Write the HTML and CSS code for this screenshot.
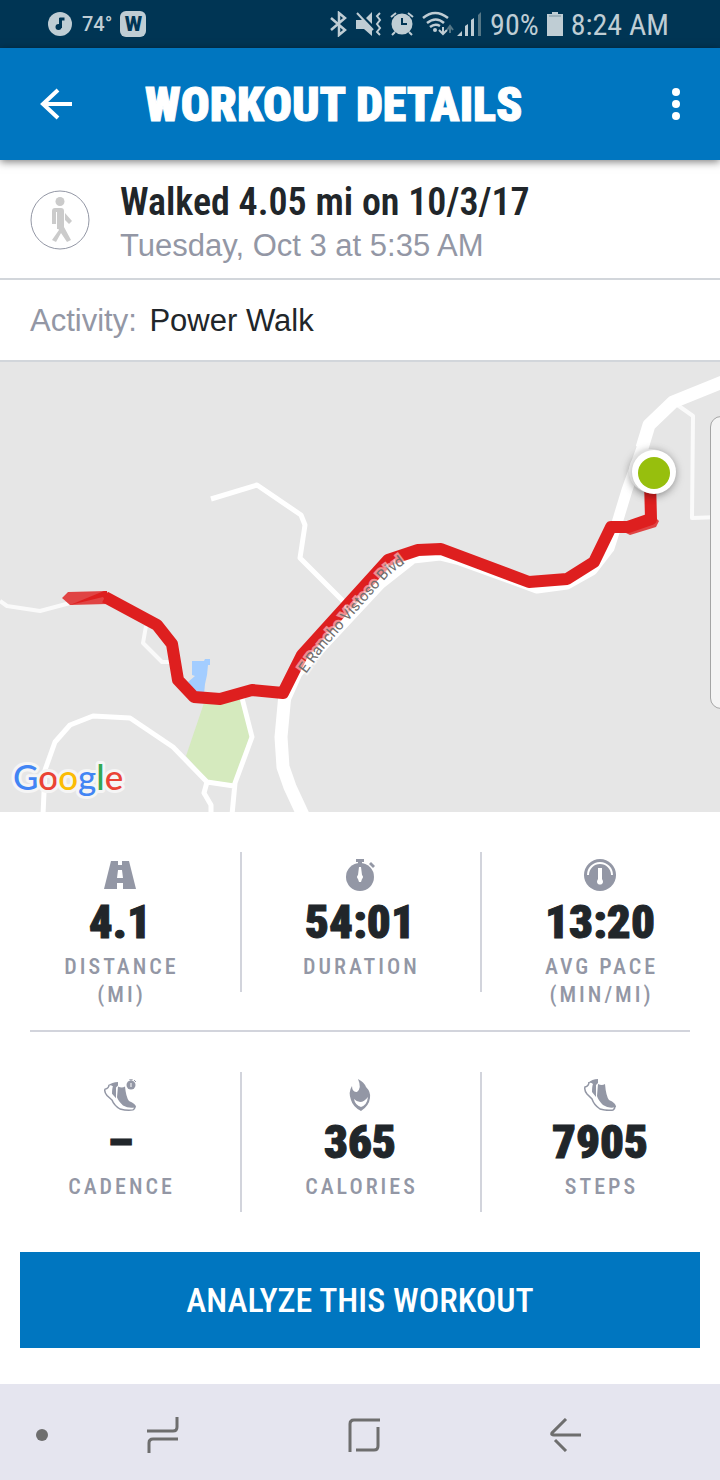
FILE: index.html
```html
<!DOCTYPE html>
<html lang="en">
<head>
  <meta charset="UTF-8">
  <meta name="viewport" content="width=device-width, initial-scale=1.0">
  <title>Workout Details</title>
  <link rel="stylesheet" href="styles.css">
</head>
<body>
  <!-- Status Bar -->
  <div class="status-bar">
    <div class="status-left">
      <svg width="24" height="24" viewBox="0 0 24 24"><circle cx="12" cy="12" r="12" fill="currentColor"/><path d="M12.500 16V6M11.500 7h5" fill="none" stroke="#003554" stroke-width="3"/><circle cx="10.500" cy="15" r="3" fill="#003554"/></svg>
      <span class="temperature">74°</span>
      <span class="badge">W</span>
    </div>
    <div class="status-right">
      <svg width="18" height="26" viewBox="0 0 18 26"><path d="M1 7l14 12-6 5V2l6 5L1 19" fill="none" stroke="currentColor" stroke-width="2.500"/></svg>
      <svg width="26" height="26" viewBox="0 0 26 26"><path d="M0 9h5l2-1 9 9v8l-8-7H0zM10 7l6-6v12z" fill="currentColor"/><path d="M1 2l16 17" stroke="currentColor" stroke-width="2"/><path d="M24 2l-3 3 3 4-3 4 3 4-3 4 3 3" fill="none" stroke="currentColor" stroke-width="2"/></svg>
      <svg width="24" height="26" viewBox="0 0 24 26"><circle cx="12" cy="13" r="10.500" fill="currentColor"/><path d="M1 6l5-4M23 6l-5-4M5 21l-3 3M19 21l3 3" stroke="currentColor" stroke-width="2"/><path d="M12 7v6h5" fill="none" stroke="#003554" stroke-width="2"/></svg>
      <svg width="32" height="26" viewBox="0 0 32 26"><path d="M1 7q12-10 25 0M5 12q9-7 17 0M8 16q5-4 10-1" fill="none" stroke="currentColor" stroke-width="2.500"/><circle cx="13" cy="19" r="2" fill="currentColor"/><path d="M21 16v7m-4-4l4 4 4-4" fill="none" stroke="currentColor" stroke-width="2"/><path d="M28 22v-7m-3 4l3-4 3 4" fill="none" stroke="#557786" stroke-width="2"/></svg>
      <svg class="signal" width="26" height="26" viewBox="0 0 26 26"><path d="M1 25h5v-5zM9 25h3V13l-3 2zM15 25h3V7l-3 2z" fill="currentColor"/><path d="M22 25h3V1l-3 3z" fill="#557786"/></svg>
      <span>90%</span>
      <svg width="16" height="24" viewBox="0 0 16 24"><path d="M5 0h6v2h5v22H0V2h5z" fill="currentColor"/><path d="M2 4h12" stroke="#7893a0"/></svg>
      <span>8:24 AM</span>
    </div>
  </div>

  <!-- App Bar -->
  <header class="app-bar">
    <button class="icon-btn" aria-label="Back">
      <svg width="32" height="32" viewBox="0 0 32 32"><path d="M32 16H3M18 2L3 16l15 14" fill="none" stroke="#fff" stroke-width="4"/></svg>
    </button>
    <h1>WORKOUT DETAILS</h1>
    <button class="icon-btn" aria-label="More options">
      <svg width="8" height="32" viewBox="0 0 8 32" fill="#fff"><circle cx="4" cy="4" r="4"/><circle cx="4" cy="16" r="4"/><circle cx="4" cy="28" r="4"/></svg>
    </button>
  </header>

  <main>
    <!-- Workout Summary -->
    <section class="summary">
      <svg width="60" height="60" viewBox="0 0 60 60">
        <circle cx="30" cy="30" r="29" fill="none" stroke="#9397a5"/>
        <g fill="#cbcbcb"><circle cx="30" cy="11.500" r="4.500"/><path d="M25 18h6q3 0 3 3v18h-7V22h-1v12h-4V21q0-3 3-3zM35 23l7 8-3 3-4-4zM27 37h7l7 13-4 2-8-12zM29 40l2 3-5 9-4-2z"/></g>
      </svg>
      <div class="summary-text">
        <h2>Walked 4.05 mi on 10/3/17</h2>
        <p>Tuesday, Oct 3 at 5:35 AM</p>
      </div>
    </section>
    <p class="activity"><span>Activity:</span> Power Walk</p>

    <!-- Route Map -->
    <section class="map">
      <svg viewBox="0 362 720 450" role="img" aria-label="Route map">
        <path class="park" d="M205 700L242 700L250 735L234 784L207 780L186 756Z"/>
        <path class="water" d="M192 661H204L205 659H210V665L208 665L207 675L205 684L204 695H196L188 682L195 676L192 675Z"/>
        <g class="roads">
          <path class="main-road" d="M725 381L673 402L649 425L642 448"/>
          <path class="mid-road" d="M643 445L627 490L617 523L609 548L592 570L567 584L537 588L460 560L440 555L413 558L380 584L297 673L285 700"/>
          <path class="main-road" d="M285 694L281 737L283 767L290 787L303 815"/>
          <path d="M211 499L257 485L301 515L305 525L300 558L345 603"/>
          <path class="path-road" d="M0 601L7 606L40 611L70 603M146 626L143 643L162 662H172M676 404L693 416L692 518L720 517"/>
          <path d="M43 815L45 770L55 742L70 725L93 716L130 718L173 747L207 782L234 786M207 782L204 793L211 805V815M242 698L252 737L235 783L232 815"/>
        </g>
        <path class="route-light" d="M62 598L68 592L107 591V604L70 605ZM652 514L659 521L656 527L630 535L620 530Z"/>
        <path class="route-end" d="M70 605L104 591H107V603L103 597Z"/>
        <path class="route" d="M650 480L651 519L628 527L611 527L594 562L567 579L529 582L441 549L418 550L388 560L302 655L283 693L252 690L220 699L194 697L178 680L172 644L157 625L105 597"/>
        <path id="street" fill="none" d="M306 674L324 649L350 619L378 587L387 577L412 558"/>
        <text class="street-name"><textPath href="#street">E Rancho Vistoso Blvd</textPath></text>
        <circle class="pin-back" cx="651" cy="471" r="22"/>
        <circle class="pin" cx="654" cy="472" r="22"/>
        <circle cx="654" cy="473" r="16" fill="#97bf0d"/>
        <text class="logo" x="13" y="790"><tspan fill="#4285f4">G</tspan><tspan fill="#ea4335">o</tspan><tspan fill="#fbbc05">o</tspan><tspan fill="#4285f4">g</tspan><tspan fill="#34a853">l</tspan><tspan fill="#ea4335">e</tspan></text>
      </svg>
      <div class="edge-handle"></div>
    </section>

    <!-- Stats -->
    <section class="stats">
      <div class="stat">
        <svg width="32" height="32" viewBox="0 0 32 32"><path d="M7 2h7v4h4V2h7l7 28H19v-6h-6v6H0zM14 11l-1 8h6l-1-8z" fill="currentColor" fill-rule="evenodd"/></svg>
        <strong>4.1</strong>
        <span>DISTANCE<br>(MI)</span>
      </div>
      <div class="stat">
        <svg width="32" height="32" viewBox="0 0 32 32"><g fill="currentColor"><circle cx="16" cy="18" r="14"/><path d="M12 0h8v3h-2v3h-4V3h-2zM27 3l4 4-2 2-4-4z"/></g><path d="M15 8h2l1 8q2 2 0 4l-1 3h-2l-1-3q-2-2 0-4z" fill="#fff"/></svg>
        <strong>54:01</strong>
        <span>DURATION</span>
      </div>
      <div class="stat">
        <svg width="32" height="32" viewBox="0 0 32 32"><circle cx="16" cy="16" r="16" fill="currentColor"/><path d="M4 16a12 12 0 0 1 24 0" fill="none" stroke="#fff" stroke-width="2"/><path d="M14 9h4v11q2 3 0 5-2 1-4 0-2-2 0-5z" fill="#fff"/></svg>
        <strong>13:20</strong>
        <span>AVG PACE<br>(MIN/MI)</span>
      </div>
    </section>
    <hr>
    <section class="stats">
      <div class="stat">
        <svg width="32" height="32" viewBox="0 0 32 32"><g transform="translate(0 3) scale(1 .9)"><g id="shoe"><path d="M5 3Q5 7 1 8 0 11 3 15L8 20Q10 26 16 30 23 32 29 31 31 30 31 27" fill="none" stroke="currentColor" stroke-width="1.500"/><path d="M4 4Q8 0 14 0L14 4 12 6V18L8 13Q8 7 9 5 7 3 4 4ZM14 5Q18 7 21 5 22 17 25 21 32 24 32 28 25 30 19 26 14 21 13 17Z" fill="currentColor"/></g></g><circle cx="27" cy="6" r="4.500" fill="currentColor"/><path d="M25 0h4M27 0v2M30 1l2 2" stroke="currentColor"/><path d="M27 4v4" stroke="#fff"/></svg>
        <strong>–</strong>
        <span>CADENCE</span>
      </div>
      <div class="stat">
        <svg width="32" height="32" viewBox="0 0 32 32"><path d="M14 0Q20 3 22 8 27 13 26 19 25 27 17 32 9 28 7 21 4 13 8 7 8 13 13 13 18 9 14 0Z" fill="currentColor"/><path d="M10 20Q17 27 24 18 23 26 17 28 11 26 10 20Z" fill="#fff"/></svg>
        <strong>365</strong>
        <span>CALORIES</span>
      </div>
      <div class="stat">
        <svg width="32" height="32" viewBox="0 0 32 32"><use href="#shoe"/></svg>
        <strong>7905</strong>
        <span>STEPS</span>
      </div>
    </section>

    <button class="btn">ANALYZE THIS WORKOUT</button>
  </main>

  <!-- System Navigation -->
  <nav class="nav-bar">
    <button class="nav-dot" aria-label="Show navigation bar"><svg width="12" height="12" viewBox="0 0 12 12"><circle cx="6" cy="6" r="6" fill="currentColor"/></svg></button>
    <button aria-label="Recent apps"><svg width="32" height="36" viewBox="0 0 32 36"><path d="M0 14h26q4 0 4-4V0M31 22H6q-4 0-4 4v10"/></svg></button>
    <button aria-label="Home"><svg width="32" height="34" viewBox="0 0 32 34"><path d="M2 34V6q0-4 4-4h26M30 9v19q0 4-4 4H8"/></svg></button>
    <button aria-label="Back"><svg width="32" height="34" viewBox="0 0 32 34"><path d="M17 1L3 15q-1 2 2 2h27M6 22l11 11"/></svg></button>
  </nav>
</body>
</html>
```
FILE: styles.css
```css
/* Global Styles */
* {
  box-sizing: border-box;
}
body {
  display: flex;
  flex-direction: column;
  min-height: 100vh;
  margin: 0;
  background-color: #fff;
  color: #21262a;
  font-family: 'Liberation Sans', sans-serif;
}
h1, h2, p {
  margin: 0;
}
button {
  padding: 0;
  border: none;
  background: none;
  cursor: pointer;
}
svg {
  display: block;
  flex-shrink: 0;
}

/* Status Bar */
.status-bar {
  display: flex;
  justify-content: space-between;
  height: 48px;
  padding: 0 51px 0 48px;
  background-color: #003554;
  color: #bfcdd4;
  font-family: 'Roboto Condensed', 'Liberation Sans Narrow', sans-serif;
  font-size: 30px;
}
.status-left, .status-right {
  display: flex;
  align-items: center;
  gap: 8px;
}
.signal {
  margin-left: -6px;
}
.temperature {
  margin-left: 2px;
  font-family: Roboto, sans-serif;
  font-size: 20px;
  font-weight: 500;
}
.badge {
  width: 26px;
  border-radius: 6px;
  background-color: #bfcdd4;
  color: #003554;
  font-family: Roboto, sans-serif;
  font-size: 20px;
  font-weight: 900;
  line-height: 26px;
  text-align: center;
}

/* App Bar */
.app-bar {
  display: flex;
  align-items: center;
  height: 112px;
  padding: 0 20px 0 32px;
  background-color: #0076c0;
  box-shadow: 0 2px 8px rgba(0, 0, 0, 0.5);
  color: #fff;
  z-index: 1;
}
.app-bar h1 {
  flex: 1;
  margin-left: 65px;
  font-family: 'Roboto Condensed', 'Liberation Sans Narrow', sans-serif;
  font-size: 48px;
  font-weight: 900;
  -webkit-text-stroke: 1px;
}
.icon-btn {
  display: flex;
  align-items: center;
  justify-content: center;
  width: 48px;
  height: 48px;
}

/* Workout Summary */
.summary {
  display: flex;
  align-items: center;
  gap: 30px;
  height: 120px;
  padding: 2px 30px 0;
  border-bottom: 2px solid #d2d6db;
}
.summary-text {
  padding-top: 8px;
}
.summary h2 {
  font-family: 'Roboto Condensed', 'Liberation Sans Narrow', sans-serif;
  font-size: 38px;
  font-weight: 600;
  line-height: 44px;
}
.summary p {
  color: #9397a5;
  font-size: 31px;
  line-height: 44px;
}
.activity {
  padding: 2px 30px 0;
  border-bottom: 2px solid #d2d6db;
  font-size: 31px;
  line-height: 78px;
}
.activity span {
  margin-right: 4px;
  color: #9397a5;
}

/* Route Map */
.map {
  position: relative;
  overflow: hidden;
  background-color: #e6e6e6;
}
.map svg {
  width: 100%;
}
.park {
  fill: #d5eabe;
}
.water {
  fill: #a3cdff;
}
.roads {
  fill: none;
  stroke: #fff;
  stroke-width: 5;
  stroke-linejoin: round;
}
.main-road {
  stroke-width: 13;
}
.mid-road {
  stroke-width: 11;
}
.path-road {
  stroke-width: 4;
  opacity: 0.8;
}
.route {
  fill: none;
  stroke: #de1f1f;
  stroke-width: 12;
  stroke-linejoin: round;
}
.route-end {
  fill: #de1f1f;
}
.route-light {
  fill: #e04444;
}
.street-name {
  fill: #6e6e6e;
  stroke: rgba(255, 255, 255, 0.5);
  stroke-width: 4;
  paint-order: stroke;
  font-family: Roboto, sans-serif;
  font-size: 15px;
}
.pin, .pin-back {
  fill: #fff;
  filter: drop-shadow(0 2px 4px rgba(0, 0, 0, 0.25));
}
.pin-back {
  fill: #eee;
}
.logo {
  stroke: #f5f5f5;
  stroke-width: 6;
  stroke-linejoin: round;
  paint-order: stroke;
  font-family: Lato, sans-serif;
  font-size: 35px;
  font-weight: 500;
}
.edge-handle {
  position: absolute;
  top: 12%;
  right: -12px;
  width: 22px;
  height: 65%;
  border: 1px solid #a5a5a5;
  border-radius: 12px;
  background-color: #f4f4f4;
}

/* Stats */
.stats {
  display: grid;
  grid-template-columns: repeat(3, 1fr);
  padding-top: 40px;
}
.stat {
  display: flex;
  flex-direction: column;
  align-items: center;
  min-height: 178px;
  padding-top: 7px;
  color: #9397a5;
  font-family: 'Roboto Condensed', 'Liberation Sans Narrow', sans-serif;
  text-align: center;
}
.stat + .stat {
  background: linear-gradient(#d2d4dc, #d2d4dc) no-repeat left top / 2px 140px;
}
.stat strong {
  color: #21262a;
  font-size: 47px;
  font-weight: 900;
  line-height: 62px;
  -webkit-text-stroke: 1px;
}
.stat span {
  padding-left: 3px;
  font-size: 22px;
  font-weight: 500;
  letter-spacing: 3px;
  line-height: 28px;
}
hr {
  height: 2px;
  margin: 0 30px;
  border: none;
  background-color: #d2d4dc;
}
.btn {
  display: block;
  width: calc(100% - 40px);
  height: 96px;
  margin: 2px 20px 36px;
  background-color: #0076c0;
  color: #fff;
  font-family: 'Roboto Condensed', 'Liberation Sans Narrow', sans-serif;
  font-size: 34px;
  font-weight: 500;
}

/* System Navigation */
.nav-bar {
  display: flex;
  height: 96px;
  margin-top: auto;
  padding: 0 54px 0 22px;
  background-color: #e5e5ef;
}
.nav-bar button {
  display: flex;
  flex: 1;
  align-items: center;
  justify-content: center;
  padding-top: 6px;
  color: #6e6e6e;
}
.nav-bar .nav-dot {
  flex: 0 0 40px;
}
.nav-bar path {
  fill: none;
  stroke: currentColor;
  stroke-width: 3;
}
```
